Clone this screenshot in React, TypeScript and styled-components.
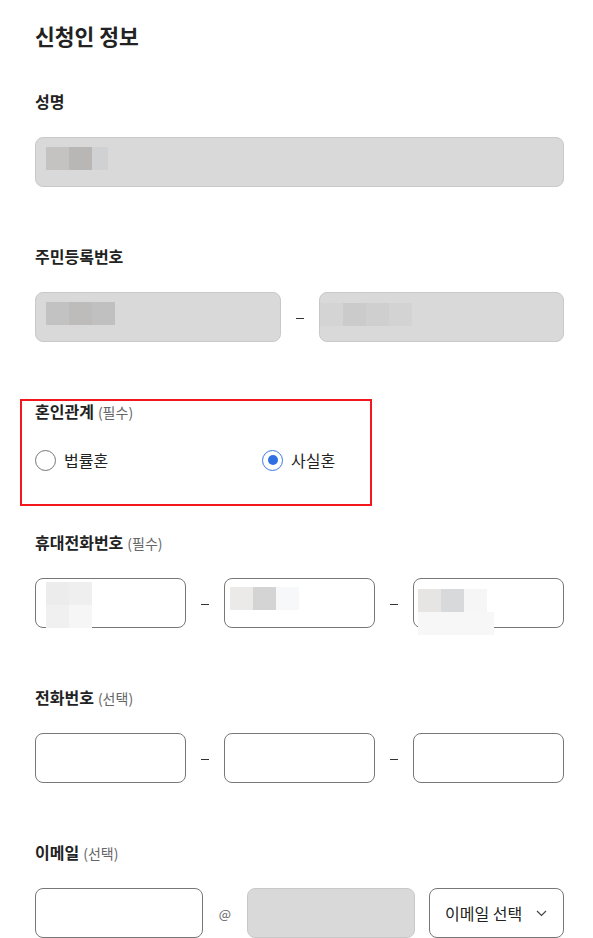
import React from "react";
import styled, { createGlobalStyle } from "styled-components";

const Global = createGlobalStyle`
  html, body { margin: 0; padding: 0; background: #fff; }
  body { font-family: "Noto Sans CJK KR", "Noto Sans", sans-serif; color: #222; }
`;

const Page = styled.div`
  width: 529px;
  padding: 21px 0 0 35px;
`;

const Title = styled.h2`
  margin: 0 0 38px;
  font-size: 21.5px;
  line-height: 30px;
  font-weight: 700;
  color: #222;
`;

const Section = styled.section<{ $mark?: boolean }>`
  position: relative;
  display: flex;
  flex-direction: column;
  margin-bottom: ${(p) => (p.$mark ? 58 : 57)}px;
  &::before {
    content: "";
    display: ${(p) => (p.$mark ? "block" : "none")};
    position: absolute;
    left: -15px;
    top: 0;
    width: 352px;
    height: 107px;
    box-sizing: border-box;
    border: 2px solid #f2171c;
    pointer-events: none;
  }
`;

const Label = styled.div<{ $gap?: number }>`
  height: 24px;
  font-size: 16px;
  line-height: 24px;
  font-weight: 700;
  color: #222;
  margin-bottom: ${(p) => p.$gap ?? 24}px;
`;

const Hint = styled.span`
  font-size: 14px;
  line-height: 1;
  font-weight: 400;
  color: #666;
  margin-left: 4px;
`;

const Field = styled.div<{ $disabled?: boolean }>`
  box-sizing: border-box;
  height: 50px;
  border-radius: 8px;
  border: 1px solid ${(p) => (p.$disabled ? "#c9c9c9" : "#777")};
  background: ${(p) => (p.$disabled ? "#d9d9d9" : "#fff")};
  min-width: 0;
`;

const Mosaic = styled.div<{ $x: number; $y: number; $cols: string }>`
  display: grid;
  grid-template-columns: ${(p) => p.$cols};
  grid-auto-rows: 23px;
  margin: ${(p) => p.$y - 1}px 0 0 ${(p) => p.$x - 1}px;
  width: max-content;
`;

const Cell = styled.div<{ $c: string }>`
  background: ${(p) => p.$c};
`;

const Row2 = styled.div`
  display: grid;
  grid-template-columns: 1fr 38px 1fr;
  align-items: center;
`;

const Row3 = styled.div`
  display: grid;
  grid-template-columns: 1fr 38px 1fr 38px 1fr;
  align-items: center;
`;

const Dash = styled.span`
  display: flex;
  justify-content: center;
  align-items: center;
  &::after {
    content: "";
    width: 8px;
    height: 1px;
    background: #333;
    margin-top: 2px;
  }
`;

const RadioRow = styled.div`
  display: grid;
  grid-template-columns: 227px 1fr;
  height: 24px;
  align-items: center;
`;

const RadioOption = styled.label`
  display: flex;
  align-items: center;
  gap: 8px;
  font-size: 16px;
  color: #222;
`;

const RadioCircle = styled.span<{ $on?: boolean }>`
  box-sizing: border-box;
  width: 21px;
  height: 21px;
  border-radius: 50%;
  border: ${(p) => (p.$on ? "1.5px solid #3a76e4" : "1px solid #767676")};
  display: flex;
  align-items: center;
  justify-content: center;
  &::after {
    content: "";
    display: ${(p) => (p.$on ? "block" : "none")};
    width: 10px;
    height: 10px;
    border-radius: 50%;
    background: #2f6fe2;
  }
`;

const EmailRow = styled.div`
  display: flex;
  align-items: center;
`;

const EmailField = styled(Field)`
  flex: 0 0 168px;
`;

const At = styled.span`
  flex: 0 0 44px;
  text-align: center;
  font-size: 13px;
  color: #666;
`;

const Select = styled.div`
  box-sizing: border-box;
  flex: 1;
  margin-left: 14px;
  height: 50px;
  border: 1px solid #777;
  border-radius: 8px;
  display: flex;
  align-items: center;
  justify-content: space-between;
  padding: 0 16px 0 15px;
  font-size: 16px;
  color: #222;
`;

const Chevron = () => (
  <svg width="11" height="7" viewBox="0 0 11 7" fill="none">
    <path d="M1 1l4.5 4.5L10 1" stroke="#444" strokeWidth="1.2" />
  </svg>
);

type Block = { x: number; y: number; cols: number[]; colors: string[] };

const Blur = ({ b }: { b: Block }) => (
  <Mosaic $x={b.x} $y={b.y} $cols={b.cols.map((c) => c + "px").join(" ")}>
    {b.colors.map((c, i) => (
      <Cell key={i} $c={c} />
    ))}
  </Mosaic>
);

export default function App() {
  return (
    <>
      <Global />
      <Page>
        <Title>신청인 정보</Title>

        <Section>
          <Label>성명</Label>
          <Field $disabled>
            <Blur b={{ x: 11, y: 10, cols: [23, 23, 16], colors: ["#c4c3c2", "#b8b7b5", "#d0d1d3"] }} />
          </Field>
        </Section>

        <Section>
          <Label>주민등록번호</Label>
          <Row2>
            <Field $disabled>
              <Blur b={{ x: 11, y: 10, cols: [23, 23, 23], colors: ["#c2c2c2", "#bdbcbb", "#c0c0c0"] }} />
            </Field>
            <Dash />
            <Field $disabled>
              <Blur b={{ x: 1, y: 11, cols: [23, 23, 23, 23], colors: ["#d4d4d4", "#cbcbcb", "#cfcfcf", "#d3d3d3"] }} />
            </Field>
          </Row2>
        </Section>

        <Section $mark>
          <Label $gap={25}>
            혼인관계<Hint>(필수)</Hint>
          </Label>
          <RadioRow>
            <RadioOption>
              <RadioCircle />
              법률혼
            </RadioOption>
            <RadioOption>
              <RadioCircle $on />
              사실혼
            </RadioOption>
          </RadioRow>
        </Section>

        <Section>
          <Label>
            휴대전화번호<Hint>(필수)</Hint>
          </Label>
          <Row3>
            <Field>
              <Blur b={{ x: 11, y: 4, cols: [23, 23], colors: ["#ececec", "#efefef", "#f0f0f0", "#f6f6f6"] }} />
            </Field>
            <Dash />
            <Field>
              <Blur b={{ x: 6, y: 9, cols: [23, 23, 23], colors: ["#ebeae8", "#d4d4d4", "#f7f8fa"] }} />
            </Field>
            <Dash />
            <Field>
              <Blur
                b={{
                  x: 5,
                  y: 11,
                  cols: [23, 23, 23, 7],
                  colors: ["#e6e5e4", "#d8d9db", "#f6f6f6", "#fff", "#f7f7f7", "#f7f7f7", "#f7f7f7", "#f7f7f7"],
                }}
              />
            </Field>
          </Row3>
        </Section>

        <Section>
          <Label>
            전화번호<Hint>(선택)</Hint>
          </Label>
          <Row3>
            <Field />
            <Dash />
            <Field />
            <Dash />
            <Field />
          </Row3>
        </Section>

        <Section>
          <Label>
            이메일<Hint>(선택)</Hint>
          </Label>
          <EmailRow>
            <EmailField />
            <At>@</At>
            <EmailField $disabled />
            <Select>
              이메일 선택
              <Chevron />
            </Select>
          </EmailRow>
        </Section>
      </Page>
    </>
  );
}
